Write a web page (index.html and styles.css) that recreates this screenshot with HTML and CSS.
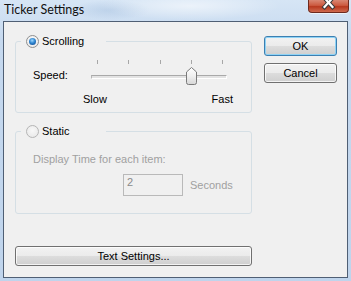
FILE: index.html
```html
<html>
	<head>
		<title>Ticker Settings</title>
		<link rel="stylesheet" href="styles.css">
	</head>
	<body>
		<div class='window'>
			<div class='titlebar'>
				<span class='title'>Ticker Settings</span>
				<span class='close'>
					<svg width='41' height='13' viewBox='0 0 41 13'>
						<path d='M16.5 -1 L24.5 8 M24.5 -1 L16.5 8' stroke='#3b3b3b' stroke-width='4.2' stroke-linecap='square'/>
						<path d='M16.5 -1 L24.5 8 M24.5 -1 L16.5 8' stroke='#ffffff' stroke-width='2.2' stroke-linecap='square'/>
					</svg>
				</span>
			</div>
			<div class='client'>
				<div class='main'>
					<fieldset class='group'>
						<legend><span class='legend'><span class='radio checked'></span>Scrolling</span></legend>
						<div class='speed'>
							<span class='label'>Speed:</span>
							<div class='slider'>
								<div class='ticks'><i></i><i></i><i></i><i></i><i></i></div>
								<div class='track'></div>
								<svg class='thumb' width='11' height='18' viewBox='0 0 11 18'>
									<defs>
										<linearGradient id='tg' x1='0' y1='0' x2='0' y2='1'>
											<stop offset='0' stop-color='#ffffff'/>
											<stop offset='0.5' stop-color='#f0f0f0'/>
											<stop offset='1' stop-color='#d6d6d6'/>
										</linearGradient>
									</defs>
									<path d='M0.5 5 L5.5 0.5 L10.5 5 V15.5 Q10.5 17.5 8.5 17.5 H2.5 Q0.5 17.5 0.5 15.5 Z' fill='url(#tg)' stroke='#7a7a7a'/>
								</svg>
							</div>
						</div>
						<div class='scale'><span>Slow</span><span>Fast</span></div>
					</fieldset>
					<fieldset class='group static'>
						<legend><span class='legend'><span class='radio off'></span>Static</span></legend>
						<div class='hint'>Display Time for each item:</div>
						<div class='time'>
							<input class='box' type='text' value='2' disabled>
							<span class='unit'>Seconds</span>
						</div>
					</fieldset>
					<button class='btn wide'>Text Settings...</button>
				</div>
				<div class='side'>
					<button class='btn default'>OK</button>
					<button class='btn'>Cancel</button>
				</div>
			</div>
		</div>
	</body>
</html>
```

FILE: styles.css
```css
body{
	margin:0;
	font-family:"Liberation Sans",Arial,sans-serif;
	font-size:11px;
	color:#000;
}
.window{
	width:351px;
	height:281px;
	box-sizing:border-box;
	padding:0 3px 3px 3px;
	background:
		radial-gradient(ellipse 90px 14px at 190px 6px,rgba(255,255,255,.55),rgba(255,255,255,0)),
		radial-gradient(ellipse 40px 10px at 110px 10px,rgba(150,180,215,.35),rgba(150,180,215,0)),
		linear-gradient(to bottom,#d6e5f5,#c6d9ef 40px,#bfd4ec);
}
.titlebar{
	height:21px;
	display:flex;
	justify-content:space-between;
	align-items:flex-start;
}
.title{
	font-family:Lato,"Liberation Sans",sans-serif;
	font-size:12.5px;
	line-height:15px;
	padding:2px 0 0 1px;
	color:#111;
}
.close{
	display:block;
	width:41px;
	height:13px;
	margin-right:-1px;
	box-sizing:border-box;
	border:1px solid #6e2a1e;
	border-top:none;
	border-radius:0 0 4px 4px;
	background:linear-gradient(to bottom,#d98773 0,#cc5a40 45%,#b8391f 55%,#cf6a4f 100%);
	box-shadow:0 1px 0 rgba(255,255,255,.6);
	overflow:hidden;
}
.close svg{
	display:block;
	margin:-1px 0 0 -1px;
}
.client{
	height:257px;
	box-sizing:border-box;
	border:1px solid #4f5f74;
	background:#f0f0f0;
	display:flex;
	padding:12px 0 0 11px;
}
.main{
	width:237px;
	display:flex;
	flex-direction:column;
}
.group{
	margin:0;
	width:237px;
	box-sizing:border-box;
	border:1px solid #d5dfe5;
	border-radius:3px;
	padding:9px 0 6px 17px;
}
.group legend{
	margin-left:-12px;
	padding:0;
	width:85px;
}
.legend{
	display:flex;
	align-items:center;
	height:14px;
	line-height:15px;
	padding-left:5px;
	gap:3px;
}
.radio{
	width:13px;
	height:13px;
	box-sizing:border-box;
	border-radius:50%;
	border:1px solid #8f8f8f;
	background:radial-gradient(circle at 50% 40%,#ffffff,#e4e4e4);
	display:flex;
	align-items:center;
	justify-content:center;
}
.radio.checked::after{
	content:'';
	width:7px;
	height:7px;
	border-radius:50%;
	background:radial-gradient(circle at 45% 35%,#9fd8ff 0,#2f86d0 45%,#0b3f86 100%);
}
.radio.off{
	border-color:#b5b5b5;
	background:radial-gradient(circle at 50% 40%,#f8f8f8,#e6e6e6);
}
.speed{
	display:flex;
	align-items:flex-start;
	height:30px;
}
.speed .label{
	width:58px;
	margin-top:12px;
	line-height:13px;
}
.slider{
	position:relative;
	width:136px;
	height:30px;
}
.ticks{
	display:flex;
	justify-content:space-between;
	padding:0 4px 0 6px;
	margin-top:3px;
	height:4px;
}
.ticks i{
	width:1px;
	background:#a7a7a7;
}
.track{
	margin-top:11px;
	height:4px;
	box-sizing:border-box;
	border-top:1px solid #a9a9a9;
	border-left:1px solid #b5b5b5;
	border-bottom:1px solid #ffffff;
	border-right:1px solid #ffffff;
	background:#e3e3e3;
}
.thumb{
	position:absolute;
	left:95px;
	top:10px;
}
.scale{
	margin:6px 0 0 50px;
	width:150px;
	display:flex;
	justify-content:space-between;
	line-height:13px;
}
.static{
	margin-top:11px;
	padding:15px 0 17px 17px;
}
.hint{
	line-height:13px;
	color:#a0a0a0;
}
.time{
	display:flex;
	align-items:flex-start;
	margin:8px 0 0 90px;
}
.box{
	width:60px;
	height:22px;
	box-sizing:border-box;
	margin:0;
	padding:1px 3px 7px 3px;
	border:1px solid #b9b9b9;
	background:#f0f0f0;
	font-family:inherit;
	font-size:11px;
	line-height:13px;
	color:#8a8a8a;
}
.unit{
	margin:5px 0 0 7px;
	line-height:13px;
	color:#a0a0a0;
}
.btn{
	font-family:inherit;
	font-size:11px;
	line-height:13px;
	color:#000;
	height:20px;
	padding:0;
	box-sizing:border-box;
	border:1px solid #707070;
	border-radius:3px;
	background:linear-gradient(to bottom,#f2f2f2 0,#ebebeb 50%,#dddddd 50%,#cfcfcf 100%);
	box-shadow:inset 0 0 0 1px rgba(255,255,255,.75);
}
.wide{
	margin-top:32px;
	width:237px;
}
.side{
	margin-left:12px;
	padding-top:2px;
	display:flex;
	flex-direction:column;
	gap:7px;
}
.side .btn{
	width:73px;
}
.default{
	border-color:#3c7fb1;
	box-shadow:inset 0 0 0 1px #8fd3f5;
}
```
